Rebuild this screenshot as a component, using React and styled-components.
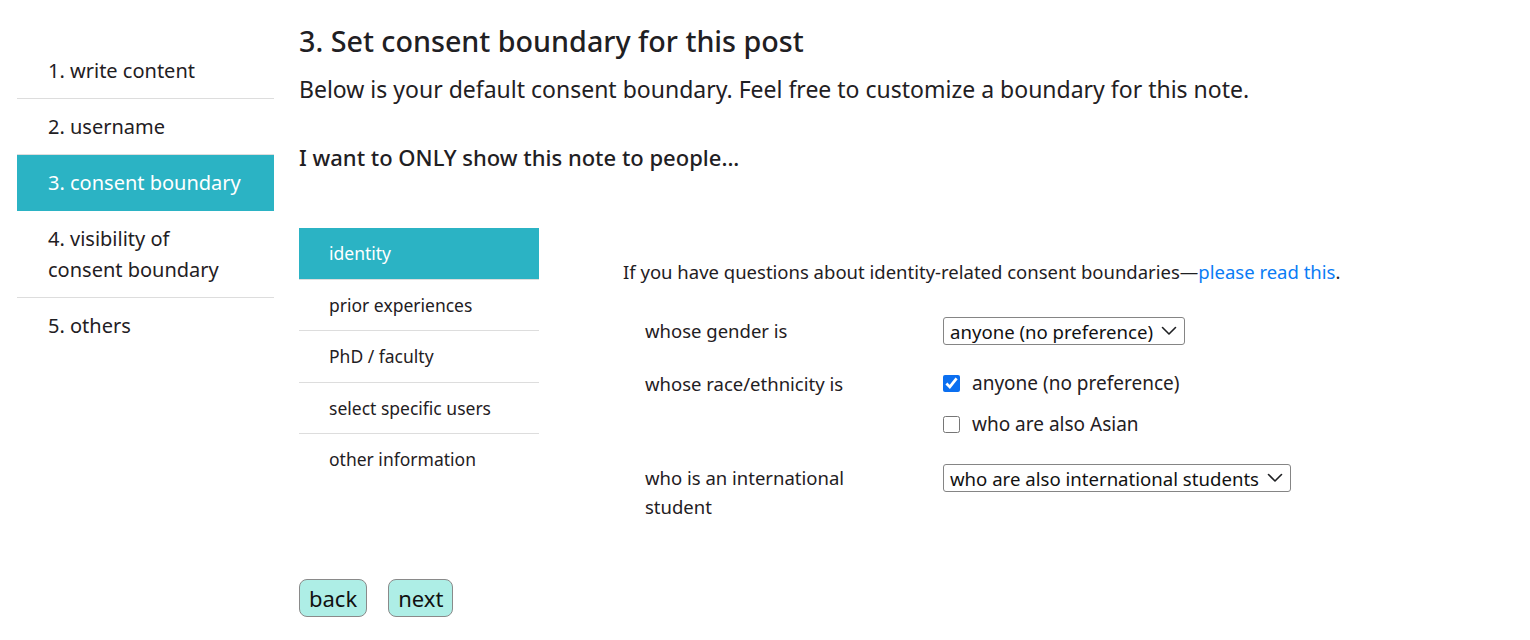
import React from 'react';
import styled, { createGlobalStyle } from 'styled-components';

const GlobalStyle = createGlobalStyle`
  body {
    margin: 0;
    background: #fff;
    font-family: "Noto Sans", Lato, sans-serif;
    color: #1f2023;
  }
`;

const steps = [
  '1. write content',
  '2. username',
  '3. consent boundary',
  '4. visibility of consent boundary',
  '5. others',
];

const tabs = [
  'identity',
  'prior experiences',
  'PhD / faculty',
  'select specific users',
  'other information',
];

const Chevron = () => (
  <svg width="16" height="10" viewBox="0 0 16 10" fill="none">
    <path d="M1.5 1.5 L8 8 L14.5 1.5" stroke="#1f2023" strokeWidth="1.6" strokeLinecap="round" strokeLinejoin="round" />
  </svg>
);

const App = () => {
  return (
    <>
      <GlobalStyle />
      <Page>
        <Sidebar>
          {steps.map((s, i) => (
            <Step key={s} active={i === 2}>
              {s}
            </Step>
          ))}
        </Sidebar>
        <Main>
          <Title>3. Set consent boundary for this post</Title>
          <Subtitle>Below is your default consent boundary. Feel free to customize a boundary for this note.</Subtitle>
          <Question>I want to ONLY show this note to people...</Question>

          <Section>
            <Tabs>
              {tabs.map((t, i) => (
                <Tab key={t} active={i === 0} last={i === tabs.length - 1}>
                  {t}
                </Tab>
              ))}
            </Tabs>
            <Panel>
              <Intro>
                If you have questions about identity-related consent boundaries—<a href="#">please read this</a>.
              </Intro>
              <Form>
                <Row>
                  <Label>whose gender is</Label>
                  <SelectBox>
                    <span>anyone (no preference)</span>
                    <Chevron />
                  </SelectBox>
                </Row>
                <Row>
                  <Label>whose race/ethnicity is</Label>
                  <Options>
                    <Option>
                      <Check type="checkbox" defaultChecked />
                      anyone (no preference)
                    </Option>
                    <Option>
                      <Check type="checkbox" />
                      who are also Asian
                    </Option>
                  </Options>
                </Row>
                <Row>
                  <Label>who is an international student</Label>
                  <SelectBox>
                    <span>who are also international students</span>
                    <Chevron />
                  </SelectBox>
                </Row>
              </Form>
            </Panel>
          </Section>

          <Buttons>
            <NavButton>back</NavButton>
            <NavButton>next</NavButton>
          </Buttons>
        </Main>
      </Page>
    </>
  );
};

export default App;

const Page = styled.div`
  display: flex;
  align-items: flex-start;
  padding-left: 17px;
`;

const Sidebar = styled.div`
  width: 257px;
  flex-shrink: 0;
  margin-top: 43px;
  display: flex;
  flex-direction: column;
`;

const Step = styled.div`
  font-size: 20px;
  line-height: 31px;
  padding: 12px 28px 12px 31px;
  border-bottom: 1px solid ${p => (p.active ? 'transparent' : '#dddddd')};
  background: ${p => (p.active ? '#2bb3c4' : 'transparent')};
  color: ${p => (p.active ? '#ffffff' : '#1f2023')};
  &:last-child {
    border-bottom: none;
  }
`;

const Main = styled.div`
  margin-left: 25px;
  padding-top: 24px;
  flex: 1;
`;

const Title = styled.h1`
  margin: 0;
  font-size: 28.7px;
  line-height: 34px;
  font-weight: 500;
`;

const Subtitle = styled.p`
  margin: 17px 0 0;
  font-size: 23px;
  line-height: 28px;
`;

const Question = styled.h3`
  margin: 40px 0 0;
  font-size: 22px;
  line-height: 28px;
  font-weight: 500;
`;

const Section = styled.div`
  display: flex;
  align-items: flex-start;
  margin-top: 57px;
`;

const Tabs = styled.div`
  width: 240px;
  flex-shrink: 0;
  display: flex;
  flex-direction: column;
`;

const Tab = styled.div`
  font-size: 17.5px;
  line-height: 24.5px;
  padding: 13px 0 13px 30px;
  background: ${p => (p.active ? '#2bb3c4' : 'transparent')};
  color: ${p => (p.active ? '#ffffff' : '#1f2023')};
  border-bottom: 1px solid ${p => (p.last ? 'transparent' : '#dddddd')};
`;

const Panel = styled.div`
  margin-left: 84px;
  padding-top: 32px;
`;

const Intro = styled.p`
  margin: 0;
  font-size: 18.5px;
  line-height: 24px;
  a {
    color: #0a7cf5;
    text-decoration: none;
  }
`;

const Form = styled.div`
  display: flex;
  flex-direction: column;
  gap: 24px;
  margin-top: 32px;
  padding-left: 22px;
`;

const Row = styled.div`
  display: grid;
  grid-template-columns: 298px auto;
  align-items: start;
`;

const Label = styled.div`
  font-size: 18.5px;
  line-height: 29px;
  max-width: 225px;
`;

const SelectBox = styled.div`
  justify-self: start;
  display: inline-flex;
  align-items: center;
  gap: 8px;
  height: 28px;
  box-sizing: border-box;
  margin-top: 1px;
  padding: 0 7px 0 6px;
  border: 1px solid #858585;
  border-radius: 3px;
  font-size: 18.6px;
  color: #111;
`;

const Options = styled.div`
  display: flex;
  flex-direction: column;
  gap: 12px;
`;

const Option = styled.label`
  display: flex;
  align-items: center;
  gap: 12px;
  font-size: 19px;
  line-height: 29px;
`;

const Check = styled.input`
  width: 17px;
  height: 17px;
  margin: 0;
  accent-color: #0b6ff0;
`;

const Buttons = styled.div`
  display: flex;
  gap: 21px;
  margin-top: 58px;
`;

const NavButton = styled.button`
  height: 38px;
  padding: 0 9px;
  font-family: inherit;
  font-size: 22px;
  color: #111;
  background: #aeeee6;
  border: 1px solid #8a8a8a;
  border-radius: 8px;
`;
